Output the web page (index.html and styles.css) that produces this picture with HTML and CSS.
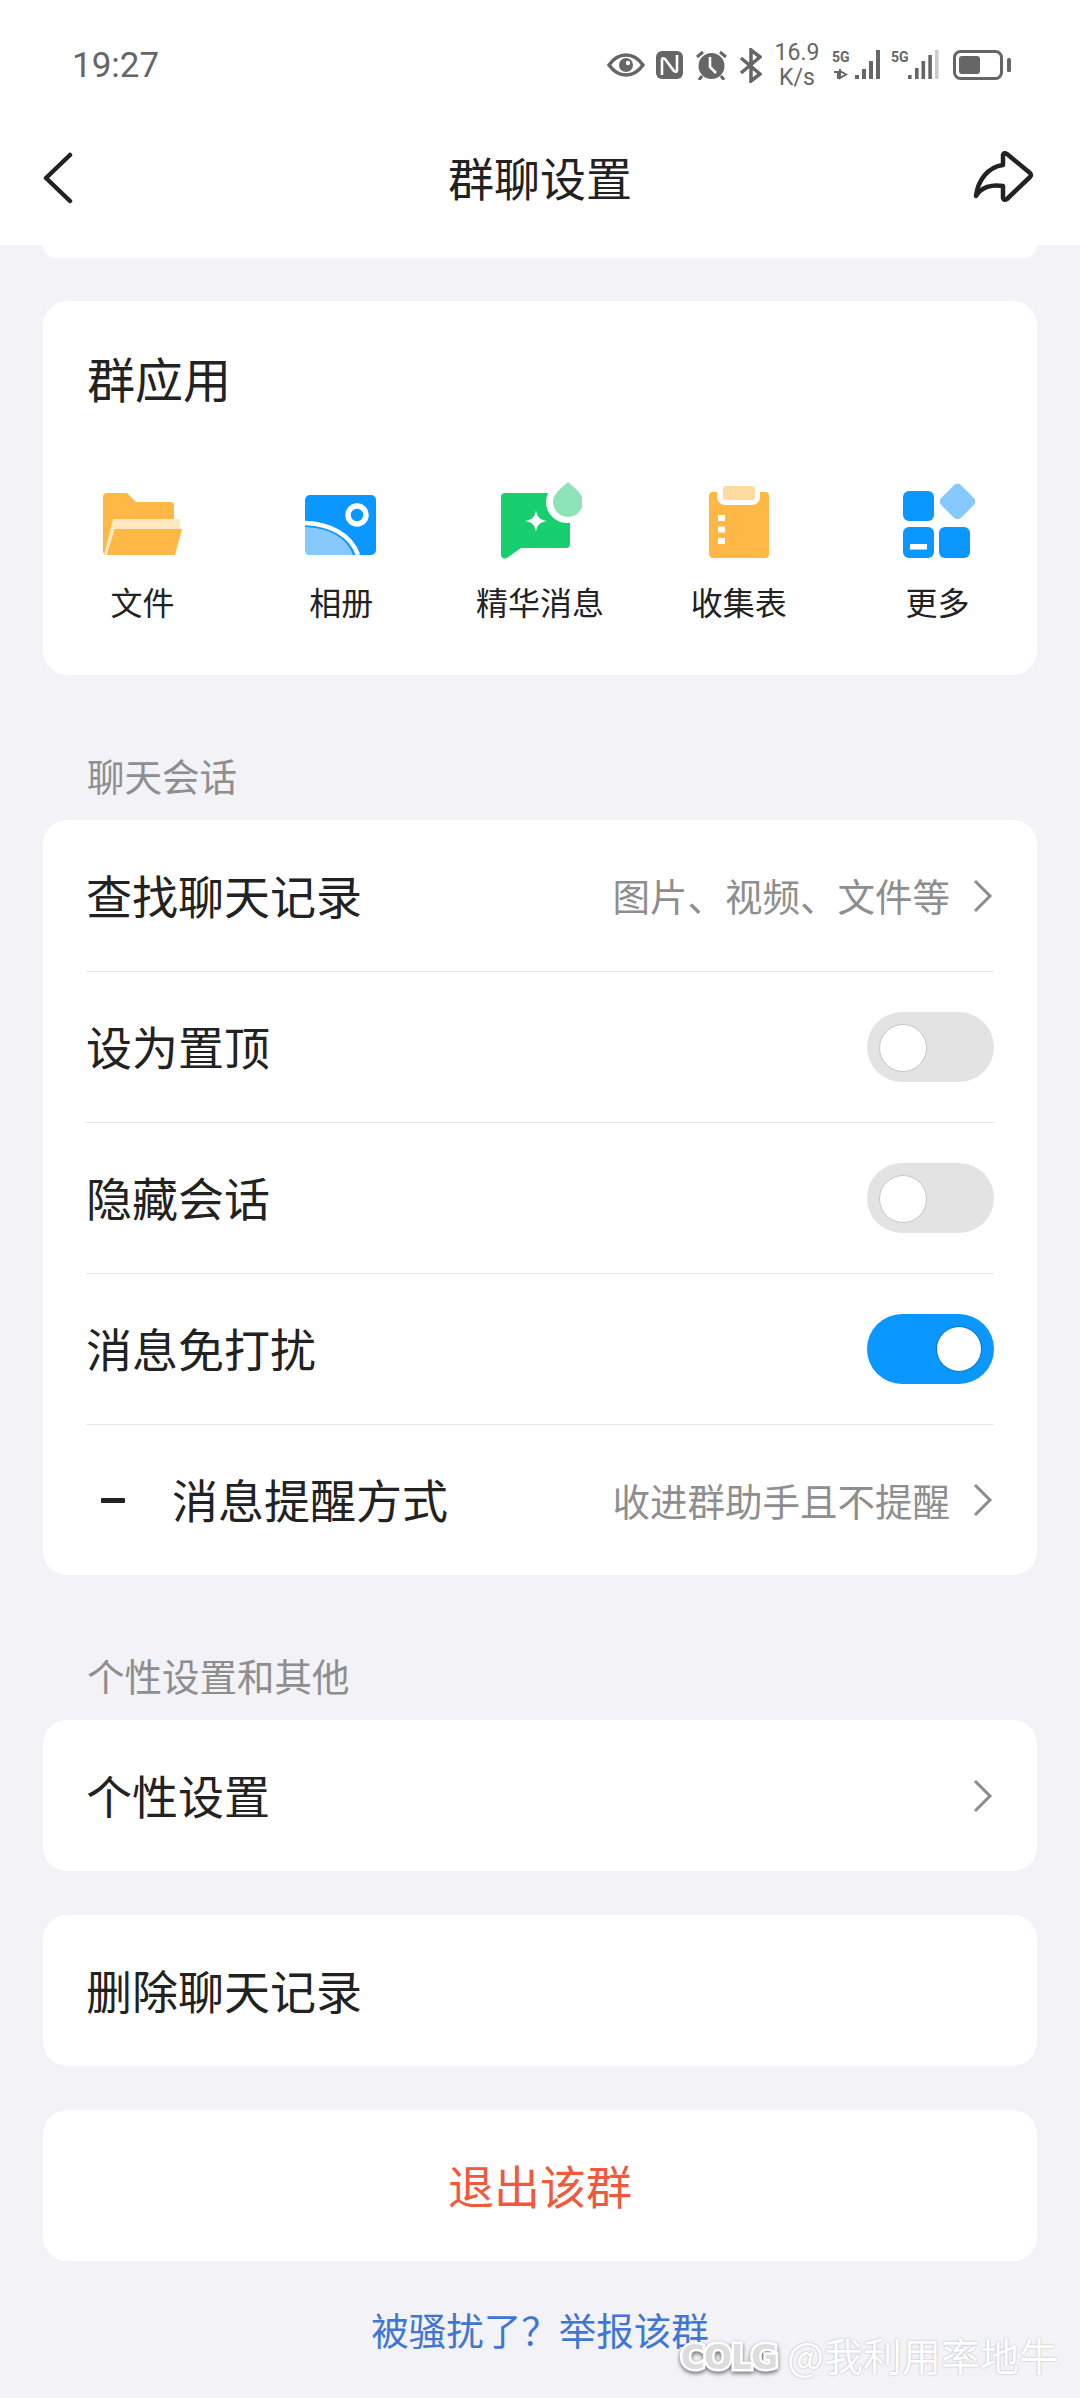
FILE: index.html
```html
<!DOCTYPE html>
<html lang="zh-CN">
  <head>
    <meta charset="UTF-8" />
    <title>群聊设置</title>
    <link rel="stylesheet" href="styles.css">
  </head>
  <body>
    <div class="top">
      <!-- status bar -->
      <div class="status">
        <span class="time">19:27</span>
        <div class="status-icons">
          <svg class="ic-eye" viewBox="0 0 38 24"><path d="M2 12C7 5 12 2 19 2s12 3 17 10c-5 7-10 10-17 10S7 19 2 12z" fill="none" stroke="#666" stroke-width="3.500"/><circle cx="19" cy="12" r="7" fill="#666"/><circle cx="21" cy="10" r="2.200" fill="#fff"/></svg>
          <svg class="ic-nfc" viewBox="0 0 27 28"><rect width="27" height="28" rx="6" fill="#666"/><path d="M6 24V9q0-3 3-1l9 12q3 2 3-1V4" fill="none" stroke="#fff" stroke-width="2.600"/></svg>
          <svg class="ic-alarm" viewBox="0 0 31 30"><circle cx="15.500" cy="16" r="13" fill="#666"/><path d="M1 7l6-5M30 7l-6-5M6 26l-3 4M25 26l3 4" stroke="#666" stroke-width="3"/><path d="M14 7v10l6 6" fill="none" stroke="#fff" stroke-width="2.600"/></svg>
          <svg class="ic-bt" viewBox="0 0 23 35"><path d="M2 10l19 16-9 7V2l9 7L2 25" fill="none" stroke="#666" stroke-width="3.500"/></svg>
          <div class="speed"><span>16.9</span><span>K/s</span></div>
          <svg class="ic-sig" viewBox="0 0 48 30"><text x="0" y="12" class="sig-text">5G</text><path d="M2 22h4v7M8 19v10M8 21l6 3.500-6 3.500z" fill="none" stroke="#666" stroke-width="2"/><path d="M23 25h4v4h-4zM30 19h4v10h-4zM37 11h4v18h-4zM44 0h4v29h-4z" fill="#666"/></svg>
          <svg class="ic-sig sig2" viewBox="0 0 48 30"><text x="0" y="12" class="sig-text">5G</text><path d="M17 25h3.600v4H17zM24 18h3.600v11H24zM30.500 11h3.600v18h-3.600zM37.300 5h3.600v24h-3.600z" fill="#666"/><path d="M44 0h3.600v29H44z" fill="#ccc"/></svg>
          <svg class="ic-batt" viewBox="0 0 58 30"><rect x="1.500" y="1.500" width="47" height="27" rx="6" fill="none" stroke="#666" stroke-width="3"/><rect x="6" y="6" width="21" height="18" rx="3" fill="#666"/><rect x="54" y="8" width="4" height="14" rx="1.500" fill="#666"/></svg>
        </div>
      </div>

      <!-- title -->
      <div class="nav">
        <svg class="back" viewBox="0 0 62 52"><path d="M27 3L3 26l24 23" fill="none" stroke="#222" stroke-width="4.500" stroke-linecap="round" stroke-linejoin="round"/></svg>
        <h1>群聊设置</h1>
        <svg class="share" viewBox="0 0 62 56"><path d="M31 6q1-3 4-1l23 19q2 2 0 4L35 50q-3 2-4-1V37C20 35 9 38 4 47 6 31 16 18 31 16z" fill="none" stroke="#222" stroke-width="4.500" stroke-linejoin="round"/></svg>
      </div>
    </div>

    <div class="stub"></div>

    <section class="card apps">
      <h2>群应用</h2>
      <div class="app-grid">
        <div class="app">
          <svg viewBox="0 0 84 84"><path d="M3 19a4 4 0 0 1 4-4h20l9 9h34a4 4 0 0 1 4 4v49H7a4 4 0 0 1-4-4z" fill="#ffb845"/><path d="M13 41h67v10H15L7 77H4z" fill="#ffe8c2"/><path d="M15 51h67l-7 26H7z" fill="#ffb845"/></svg>
          <span>文件</span>
        </div>
        <div class="app">
          <svg viewBox="0 0 84 84"><rect x="6" y="17" width="71" height="60" rx="5" fill="#0a97ff"/><path d="M6 49c22 1 41 9 48 28H11a5 5 0 0 1-5-5z" fill="#85c9ff"/><path d="M6 45c26 1 46 12 53 32" fill="none" stroke="#fff" stroke-width="4.500"/><circle cx="58" cy="37" r="9" fill="#0a97ff" stroke="#fff" stroke-width="5.500"/></svg>
          <span>相册</span>
        </div>
        <div class="app">
          <svg viewBox="0 0 84 84"><path d="M3 19a4 4 0 0 1 4-4h61a4 4 0 0 1 4 4v47a4 4 0 0 1-4 4H23L9 80c-3 1-6 0-6-3z" fill="#18cf6f"/><circle cx="69" cy="24" r="21" fill="#fff"/><path d="M70 4c5 5 15 11 15 20a15 15 0 0 1-30 0c0-9 10-15 15-20z" fill="#8de4b7"/><path d="M38 32c1 7 4 10 11 11-7 1-10 4-11 11-1-7-4-10-11-11 7-1 10-4 11-11z" fill="#fff"/></svg>
          <span>精华消息</span>
        </div>
        <div class="app">
          <svg viewBox="0 0 84 84"><path d="M12 18a4 4 0 0 1 4-4h4v5a8 8 0 0 0 8 8h27a8 8 0 0 0 8-8v-5h5a4 4 0 0 1 4 4v58a4 4 0 0 1-4 4H16a4 4 0 0 1-4-4z" fill="#ffb845"/><rect x="26" y="8" width="32" height="14" rx="3" fill="#ffdba0"/><path d="M21 37h7v6h-7zM21 48.500h7v6h-7zM21 60h7v6h-7z" fill="#fff"/></svg>
          <span>收集表</span>
        </div>
        <div class="app">
          <svg viewBox="0 0 84 84"><rect x="7" y="13" width="31" height="30" rx="6" fill="#0a97ff"/><rect x="7" y="49" width="31" height="31" rx="6" fill="#0a97ff"/><rect x="43" y="49" width="31" height="31" rx="6" fill="#0a97ff"/><rect x="14" y="66" width="17" height="5.500" fill="#fff"/><rect x="47.500" y="9.500" width="28" height="28" rx="5" transform="rotate(45 61.500 23.500)" fill="#85c9ff"/></svg>
          <span>更多</span>
        </div>
      </div>
    </section>

    <div class="sec-title">聊天会话</div>
    <section class="card list">
      <div class="row">
        <span class="name">查找聊天记录</span>
        <span class="val">图片、视频、文件等</span>
        <svg class="arrow" viewBox="0 0 22 36"><path d="M3 3l15 15L3 33" fill="none" stroke="#8c8c8c" stroke-width="3"/></svg>
      </div>
      <div class="row">
        <span class="name">设为置顶</span>
        <span class="switch"></span>
      </div>
      <div class="row">
        <span class="name">隐藏会话</span>
        <span class="switch"></span>
      </div>
      <div class="row">
        <span class="name">消息免打扰</span>
        <span class="switch on"></span>
      </div>
      <div class="row">
        <span class="dash"></span>
        <span class="name">消息提醒方式</span>
        <span class="val">收进群助手且不提醒</span>
        <svg class="arrow" viewBox="0 0 22 36"><path d="M3 3l15 15L3 33" fill="none" stroke="#8c8c8c" stroke-width="3"/></svg>
      </div>
    </section>

    <div class="sec-title">个性设置和其他</div>
    <section class="card list">
      <div class="row">
        <span class="name">个性设置</span>
        <svg class="arrow" viewBox="0 0 22 36"><path d="M3 3l15 15L3 33" fill="none" stroke="#8c8c8c" stroke-width="3"/></svg>
      </div>
    </section>

    <section class="card list gap">
      <div class="row"><span class="name">删除聊天记录</span></div>
    </section>

    <section class="card list gap">
      <div class="row center"><span class="name quit">退出该群</span></div>
    </section>

    <a class="report">被骚扰了？举报该群</a>

    <!-- 水印 -->
    <div class="mark"><b>COLG</b><span>@我利用率地牛</span></div>
  </body>
</html>
```

FILE: styles.css
```css
* {
  box-sizing: border-box;
}
html,
body {
  margin: 0;
  padding: 0;
}
body {
  position: relative;
  width: 1080px;
  height: 2398px;
  overflow: hidden;
  background-color: #f2f2f7;
  font-family: "Noto Sans CJK SC", "Noto Sans", sans-serif;
  color: #222;
}
svg {
  display: block;
  flex: none;
}
.top {
  background-color: #fff;
  height: 245px;
}
.status {
  height: 130px;
  padding: 0 69px 0 72px;
  display: flex;
  align-items: center;
  justify-content: space-between;
}
.time {
  font-family: Roboto, sans-serif;
  font-size: 35px;
  color: #666;
}
.status-icons {
  display: flex;
  align-items: center;
}
.ic-eye {
  width: 38px;
  height: 24px;
  margin-right: 11px;
}
.ic-nfc {
  width: 27px;
  height: 28px;
  margin-right: 13px;
}
.ic-alarm {
  width: 31px;
  height: 30px;
  margin-right: 12px;
}
.ic-bt {
  width: 23px;
  height: 35px;
  margin-right: 13px;
}
.speed {
  display: flex;
  flex-direction: column;
  align-items: center;
  width: 44px;
  margin-right: 13px;
  font-family: Roboto, sans-serif;
  font-size: 23px;
  line-height: 25px;
  color: #666;
}
.ic-sig {
  width: 48px;
  height: 30px;
  margin-right: 11px;
}
.sig2 {
  margin-right: 14px;
}
.sig-text {
  font-family: Roboto, sans-serif;
  font-size: 14px;
  font-weight: 700;
  fill: #666;
}
.ic-batt {
  width: 58px;
  height: 30px;
}
.nav {
  height: 95px;
  padding: 0 43px;
  display: flex;
  align-items: center;
  justify-content: space-between;
}
.back {
  width: 62px;
  height: 52px;
}
.share {
  width: 62px;
  height: 56px;
  margin: -2px 3px 0 -3px;
}
.nav h1 {
  margin: 0 0 3px;
  font-size: 46px;
  font-weight: 400;
  line-height: 1;
}
.card {
  margin: 0 43px;
  background-color: #fff;
  border-radius: 24px;
}
.stub {
  height: 13px;
  margin: 0 43px 43px;
  background-color: #fff;
  border-radius: 0 0 24px 24px;
}
.apps {
  height: 374px;
}
.apps h2 {
  margin: 0;
  padding: 46px 0 0 44px;
  font-size: 48px;
  font-weight: 400;
  line-height: 60px;
}
.app-grid {
  margin-top: 71px;
  display: grid;
  grid-template-columns: repeat(5, 1fr);
}
.app {
  display: flex;
  flex-direction: column;
  align-items: center;
  gap: 17px;
  font-size: 32px;
  line-height: 44px;
}
.app svg {
  width: 84px;
  height: 84px;
}
.sec-title {
  height: 145px;
  padding: 76px 0 0 87px;
  font-size: 37.5px;
  line-height: 48px;
  color: #8e8e8e;
}
.row {
  display: flex;
  align-items: center;
  height: 151px;
  margin: 0 43px;
  font-size: 46px;
}
.row + .row {
  border-top: 1px solid #e6e6e6;
}
.name {
  flex: 1;
  padding-bottom: 4px;
  white-space: nowrap;
}
.center {
  text-align: center;
}
.quit {
  color: #ef5a3c;
}
.val {
  padding-bottom: 2px;
  font-size: 37.5px;
  color: #8e8e8e;
  margin-right: 22px;
}
.arrow {
  width: 22px;
  height: 36px;
}
.dash {
  width: 24px;
  height: 5px;
  margin: 0 47px 0 15px;
  background-color: #222;
  border-radius: 1px;
}
.switch {
  position: relative;
  width: 127px;
  height: 70px;
  border-radius: 35px;
  background-color: #e3e3e3;
}
.switch::after {
  content: "";
  position: absolute;
  top: 12px;
  left: 12px;
  width: 46px;
  height: 46px;
  border-radius: 50%;
  background-color: #fff;
  border: 1px solid #c8c8c8;
}
.switch.on {
  background-color: #0a97ff;
}
.switch.on::after {
  top: 13px;
  left: 70px;
  width: 44px;
  height: 44px;
  border: 0;
  box-shadow: 0 0 0 1px rgba(0, 70, 140, 0.4);
}
.gap {
  margin-top: 44px;
}
.report {
  display: block;
  margin-top: 43px;
  text-align: center;
  font-size: 37.5px;
  line-height: 50px;
  color: #3f76d4;
}
.mark {
  position: absolute;
  right: 22px;
  bottom: 21px;
  display: flex;
  align-items: center;
  gap: 10px;
  color: #fff;
}
.mark b {
  margin-top: 6px;
  font-family: "DejaVu Sans", sans-serif;
  font-size: 33px;
  font-weight: 700;
  letter-spacing: -1px;
  -webkit-text-stroke: 5px #fff;
  color: #ddd;
  paint-order: stroke fill;
  filter: drop-shadow(0 2px 2px rgba(0, 0, 0, 0.55));
}
.mark span {
  font-size: 39px;
  line-height: 46px;
  text-shadow: 0 0 2px rgba(0, 0, 0, 0.3);
}
```
